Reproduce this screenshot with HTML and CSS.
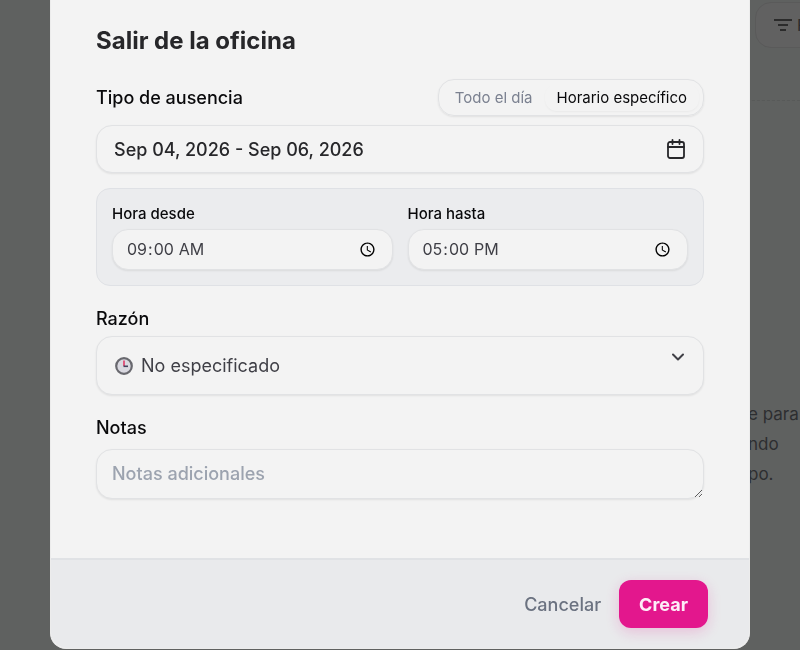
FILE: index.html
```html
<!DOCTYPE html>
<html lang="es">
<head>
  <meta charset="UTF-8">
  <meta name="viewport" content="width=device-width, initial-scale=1.0">
  <title>Salir de la oficina</title>
  <link rel="stylesheet" href="styles.css">
</head>
<body>
  <main class="page">
    <div class="page-toolbar">
      <button class="filter-button" type="button" aria-label="Filtros">
        <svg width="18" height="14" viewBox="0 0 18 14" fill="none" stroke="currentColor" stroke-width="2">
          <path d="M0 2h18M4 7h10M6 12h6"/>
        </svg>
        <span>F</span>
      </button>
    </div>
    <p class="page-text">e para<br>ndo<br>po.</p>
  </main>

  <div class="overlay">
    <form class="modal" role="dialog" aria-labelledby="modal-title">
      <div class="modal-body">
        <h2 class="modal-title" id="modal-title">Salir de la oficina</h2>

        <div class="type-row">
          <span class="label" id="type-label">Tipo de ausencia</span>
          <div class="toggle" role="group" aria-labelledby="type-label">
            <button class="toggle-option" type="button">Todo el día</button>
            <button class="toggle-option active" type="button">Horario específico</button>
          </div>
        </div>

        <button class="field date-button" type="button">
          <span>Sep 04, 2026 - Sep 06, 2026</span>
          <svg width="20" height="20" viewBox="0 0 20 20" fill="none" stroke="currentColor" stroke-width="1.8" stroke-linecap="round" stroke-linejoin="round">
            <rect x="2" y="3" width="16" height="16" rx="2"/>
            <path d="M2 8h16M6.500 1v4M13.500 1v4"/>
          </svg>
        </button>

        <div class="time-panel">
          <div class="time-group">
            <label class="time-label" for="from">Hora desde</label>
            <input class="field time-input" id="from" type="time" value="09:00">
          </div>
          <div class="time-group">
            <label class="time-label" for="to">Hora hasta</label>
            <input class="field time-input" id="to" type="time" value="17:00">
          </div>
        </div>

        <label class="label" for="reason">Razón</label>
        <div class="select-wrap">
          <select class="field reason-select" id="reason">
            <option>No especificado</option>
          </select>
          <svg class="reason-icon" width="18" height="18" viewBox="0 0 18 18" fill="none">
            <circle cx="9" cy="9" r="7.800" fill="#d9d8e0" stroke="#68686e" stroke-width="2.200"/>
            <path d="M9 3.500V9" stroke="#e0436f" stroke-width="1.700"/>
            <path d="M8.500 9.300H13" stroke="#45425f" stroke-width="1.600"/>
          </svg>
          <svg class="reason-arrow" width="12" height="8" viewBox="0 0 12 8" fill="none" stroke="currentColor" stroke-width="2" stroke-linecap="round" stroke-linejoin="round">
            <path d="M1 1.500l5 5 5-5"/>
          </svg>
        </div>

        <label class="label" for="notes">Notas</label>
        <textarea class="field notes" id="notes" rows="1" placeholder="Notas adicionales"></textarea>
      </div>

      <div class="modal-footer">
        <button class="cancel-button" type="button">Cancelar</button>
        <button class="create-button" type="submit">Crear</button>
      </div>
    </form>
  </div>
</body>
</html>
```
FILE: styles.css
```css
* {
  box-sizing: border-box;
}

body {
  margin: 0;
  font-family: Inter, "Liberation Sans", sans-serif;
  font-size: 18px;
  color: #09090b;
  background: #5f6160;
}

button,
input,
select,
textarea {
  font-family: inherit;
  color: inherit;
}

button {
  cursor: pointer;
}

/* page behind the dialog */
.page {
  min-height: 100vh;
  overflow: hidden;
}

.page-toolbar {
  display: flex;
  justify-content: flex-end;
  height: 101px;
  margin-left: 80px;
  padding-top: 2px;
  border-bottom: 1px dashed #585a59;
}

.filter-button {
  display: flex;
  align-items: center;
  gap: 5px;
  flex-shrink: 0;
  width: 120px;
  height: 46px;
  margin-right: -75px;
  padding: 0 18px;
  border: 1px solid #5a5a5a;
  border-radius: 16px;
  background: #616161;
  color: #2b2b2b;
  font-size: 16px;
}

.page-text {
  width: 52px;
  margin: 298px 0 0 auto;
  font-size: 17px;
  line-height: 30px;
  white-space: nowrap;
  color: #2d2e30;
}

.overlay {
  position: fixed;
  inset: 0;
  padding: 0 50px;
}

.modal {
  max-width: 700px;
  margin: 0 auto;
  overflow: hidden;
  border: 1px solid #ececec;
  border-top: 0;
  border-radius: 0 0 16px 16px;
  background: #f3f3f3;
}

.modal-body {
  padding: 25px 45px 59px;
}

.modal-title {
  margin: 0 0 22px;
  font-size: 24px;
  font-weight: 700;
  line-height: 32px;
  color: #27272a;
}

.label {
  display: block;
  font-size: 18px;
  font-weight: 500;
  line-height: 24px;
}

.field {
  display: block;
  width: 100%;
  border: 1px solid #e1e2e4;
  border-radius: 16px;
  background: #f3f3f3;
  box-shadow: 0 1px 2px rgba(0, 0, 0, 0.08);
}

.type-row {
  display: flex;
  align-items: center;
  justify-content: space-between;
  margin-bottom: 9px;
}

.toggle {
  display: flex;
  padding: 4px;
  border: 1px solid #e1e2e4;
  border-radius: 16px;
  box-shadow: 0 1px 2px rgba(0, 0, 0, 0.08);
}

.toggle-option {
  height: 27px;
  padding: 0 12px;
  border: 0;
  border-radius: 12px;
  background: none;
  color: #7b8190;
  font-size: 15px;
}

.toggle-option.active {
  color: #09090b;
  box-shadow: 0 1px 2px rgba(0, 0, 0, 0.04);
}

.date-button {
  display: flex;
  align-items: center;
  justify-content: space-between;
  height: 48px;
  margin-bottom: 15px;
  padding: 0 17px;
  color: #27272a;
  font-size: 18px;
  font-weight: 500;
}

.time-panel {
  display: grid;
  grid-template-columns: 1fr 1fr;
  gap: 15px;
  margin-bottom: 21px;
  padding: 15px;
  border: 1px solid #dfe1e5;
  border-radius: 14px;
  background: #ebecee;
}

.time-label {
  display: block;
  margin-bottom: 5px;
  font-size: 15px;
  font-weight: 500;
  line-height: 20px;
}

.time-input {
  height: 41px;
  padding: 0 13px;
  color: #3f3f46;
  font-size: 16px;
}

.select-wrap {
  position: relative;
  margin: 5px 0 21px;
}

.reason-select {
  height: 59px;
  padding: 0 44px;
  appearance: none;
  color: #3f3f46;
  font-size: 18px;
}

.reason-icon,
.reason-arrow {
  position: absolute;
  pointer-events: none;
}

.reason-icon {
  top: 21px;
  left: 19px;
}

.reason-arrow {
  top: 17px;
  right: 20px;
  color: #3f3f46;
}

.notes {
  height: 50px;
  margin-top: 9px;
  padding: 12px 15px;
  resize: vertical;
  font-size: 18px;
  font-weight: 500;
  line-height: 24px;
}

.notes::placeholder {
  color: #9ca3af;
}

.modal-footer {
  display: flex;
  align-items: center;
  justify-content: flex-end;
  gap: 18px;
  padding: 20px 41px;
  border-top: 2px solid #e0e2e5;
  border-radius: 0 0 16px 16px;
  background: #e9eaec;
}

.cancel-button {
  padding: 0;
  border: 0;
  background: none;
  color: #6b7280;
  font-size: 18px;
  font-weight: 500;
}

.create-button {
  height: 48px;
  padding: 0 20px;
  border: 0;
  border-radius: 12px;
  background: #e3178d;
  box-shadow: 0 4px 14px rgba(227, 23, 141, 0.2);
  color: #fdeef7;
  font-size: 18px;
  font-weight: 700;
}
```
